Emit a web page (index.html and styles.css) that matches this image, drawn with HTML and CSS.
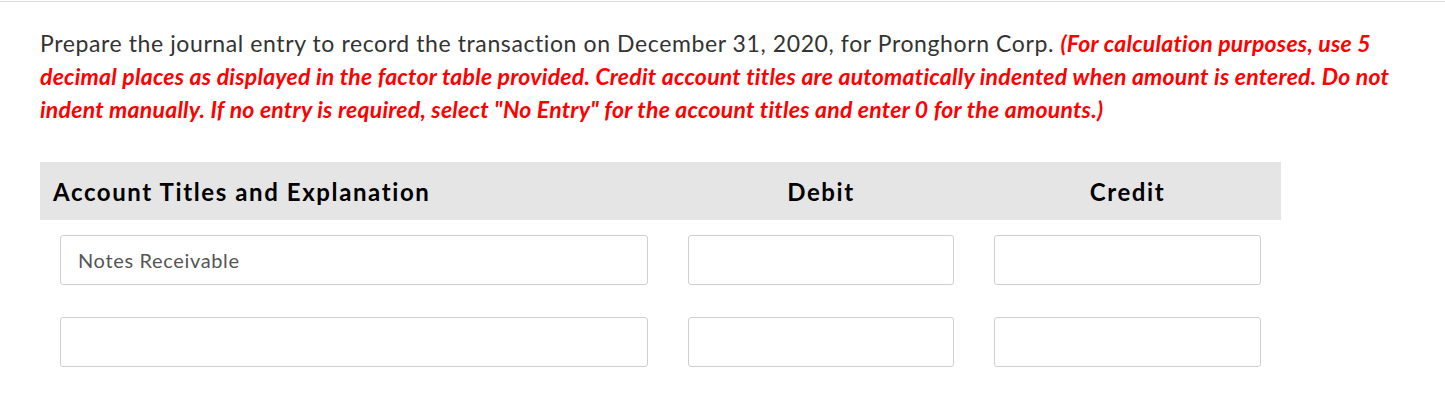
FILE: index.html
```html
<!DOCTYPE html>
<html>
<head>
<meta charset="utf-8">
<link rel="stylesheet" href="styles.css">
</head>
<body>
<div class="page">
  <p class="question">Prepare the journal entry to record the transaction on December 31, 2020, for Pronghorn Corp. <span class="note">(For calculation purposes, use 5 decimal places as displayed in the factor table provided. Credit account titles are automatically indented when amount is entered. Do not indent manually. If no entry is required, select "No Entry" for the account titles and enter 0 for the amounts.)</span></p>
  <table class="journal">
    <colgroup>
      <col class="c-account">
      <col class="c-debit">
      <col class="c-credit">
    </colgroup>
    <thead>
      <tr>
        <th class="col-account">Account Titles and Explanation</th>
        <th class="col-amount">Debit</th>
        <th class="col-amount">Credit</th>
      </tr>
    </thead>
    <tbody>
      <tr class="first-row">
        <td><div class="field">Notes Receivable</div></td>
        <td><div class="field"></div></td>
        <td><div class="field"></div></td>
      </tr>
      <tr>
        <td><div class="field"></div></td>
        <td><div class="field"></div></td>
        <td><div class="field"></div></td>
      </tr>
    </tbody>
  </table>
</div>
</body>
</html>
```

FILE: styles.css
```css
html, body {
  margin: 0;
  padding: 0;
  background: #fff;
}

body {
  padding-top: 1px;
  font-family: Lato, "Liberation Sans", sans-serif;
  font-variant-ligatures: none;
}

.page {
  border-top: 1px solid #dcdcdc;
  padding: 0 40px;
}

.question {
  margin: 25px 0 0 0;
  font-size: 23px;
  line-height: 33px;
  letter-spacing: 0.6px;
  color: #333;
  max-width: 1370px;
}

.note {
  color: #ff0000;
  font-style: italic;
  font-weight: bold;
  letter-spacing: 0.24px;
}

.journal {
  margin-top: 36px;
  border-collapse: collapse;
  width: 1241px;
  table-layout: fixed;
}

.c-account { width: 628px; }
.c-debit { width: 306px; }
.c-credit { width: 307px; }

.journal th {
  background: #e5e5e5;
  height: 58px;
  padding: 0;
  font-size: 24px;
  font-weight: bold;
  letter-spacing: 1.6px;
  color: #000;
}

.journal th.col-account {
  text-align: left;
  padding-left: 13px;
}

.journal th.col-amount {
  text-align: center;
}

.journal td {
  padding: 16px 20px;
}

.journal tr.first-row td {
  padding-top: 15px;
}

.field {
  height: 48px;
  border: 1px solid #cfcfcf;
  border-radius: 3px;
  background: #fff;
  display: flex;
  align-items: center;
  padding: 0 17px;
  font-size: 20px;
  letter-spacing: 0.65px;
  color: #555;
}
```
